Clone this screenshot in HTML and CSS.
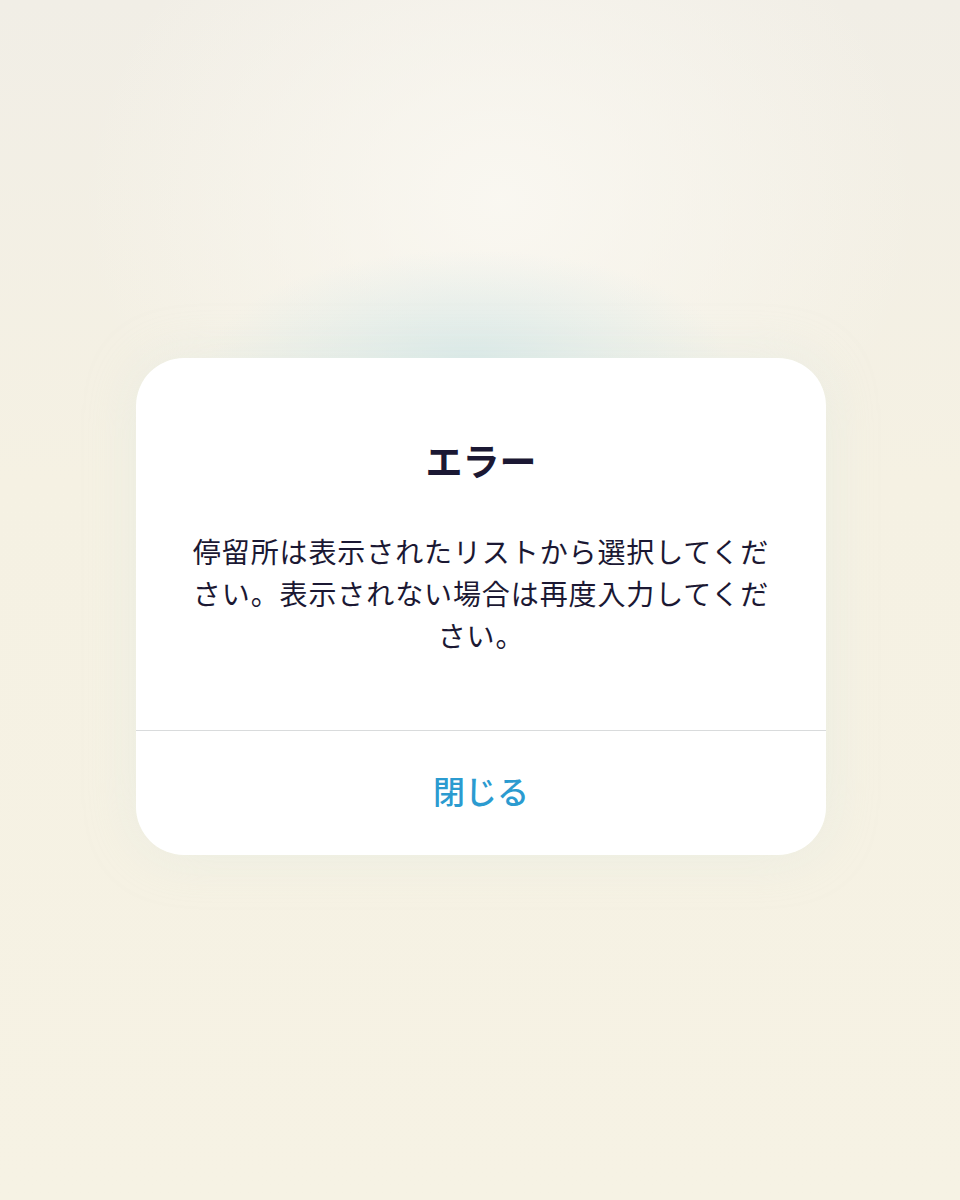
FILE: index.html
```html
<!DOCTYPE html>
<html lang="ja">
<head>
  <meta charset="UTF-8">
  <title>エラー</title>
  <link rel="stylesheet" href="styles.css">
</head>
<body>

  <div class="backdrop">
    <div class="dialog">
      <div class="dialog-body">
        <h2 class="dialog-title">エラー</h2>
        <p class="dialog-message">停留所は表示されたリストから選択してください。表示されない場合は再度入力してください。</p>
      </div>
      <button class="dialog-button" type="button">閉じる</button>
    </div>
  </div>

</body>
</html>
```

FILE: styles.css
```css
html, body {
  height: 100%;
}
body {
  margin: 0;
  padding: 0;
  font-family: 'Noto Sans CJK JP', 'Noto Sans', sans-serif;
  color: #1b1833;
  background-color: #f5f1e3;
  background-image:
    radial-gradient(ellipse 260px 110px at 470px 360px, rgba(214, 232, 232, 0.85), rgba(214, 232, 232, 0) 100%),
    radial-gradient(ellipse 420px 360px at 500px 200px, rgba(250, 248, 242, 0.9), rgba(250, 248, 242, 0) 100%),
    linear-gradient(#f1eee6, #f5f1e3 40%, #f6f2e4);
}
.backdrop {
  display: flex;
  justify-content: center;
  padding: 358px 0 0 2px;
}
.dialog {
  width: 690px;
  background-color: #fff;
  border-radius: 48px;
  box-shadow: 0 0 50px rgba(215, 230, 224, 0.35);
  overflow: hidden;
}
.dialog-body {
  padding: 77px 50px 74px;
  text-align: center;
  border-bottom: 1px solid #d9dbdc;
}
.dialog-title {
  margin: 0 0 45px;
  font-size: 37px;
  line-height: 50px;
  font-weight: bold;
  color: #1b1833;
}
.dialog-message {
  margin: 0;
  font-size: 28px;
  line-height: 42px;
  letter-spacing: 0.9px;
  color: #1b1833;
}
.dialog-button {
  display: block;
  width: 100%;
  height: 124px;
  padding: 0 0 6px;
  border: none;
  background: none;
  font-family: inherit;
  font-size: 32px;
  font-weight: 500;
  color: #2b9bd0;
  cursor: pointer;
}
```
